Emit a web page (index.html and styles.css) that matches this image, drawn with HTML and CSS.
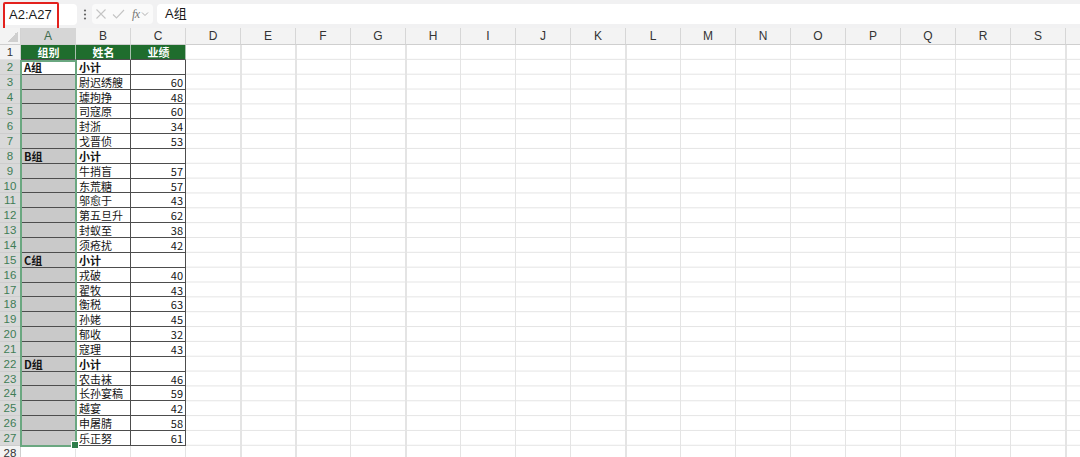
FILE: index.html
```html
<!DOCTYPE html>
<html lang="zh-CN">
<head>
<meta charset="utf-8">
<title>Sheet</title>
<link rel="stylesheet" href="styles.css">
</head>
<body>
<div class="toolbar">
  <div class="namebox">A2:A27</div>
  <div class="dots"><svg width="4" height="11" viewBox="0 0 4 11"><circle cx="2" cy="1.5" r="1.1" fill="#666"/><circle cx="2" cy="5.5" r="1.1" fill="#666"/><circle cx="2" cy="9.5" r="1.1" fill="#666"/></svg></div>
  <div class="fxbox">
    <svg class="ic" width="12" height="12" viewBox="0 0 12 12"><path d="M1.5 1.5 L10.5 10.5 M10.5 1.5 L1.5 10.5" stroke="#c4c4c4" stroke-width="1.1" fill="none"/></svg>
    <svg class="ic" width="13" height="12" viewBox="0 0 13 12"><path d="M1 6.5 L4.5 10 L12 2" stroke="#c4c4c4" stroke-width="1.1" fill="none"/></svg>
    <span class="fx">fx</span>
    <svg class="chev" width="8" height="6" viewBox="0 0 8 6"><path d="M1 1.5 L4 4.5 L7 1.5" stroke="#b0b0b0" stroke-width="1" fill="none"/></svg>
  </div>
  <div class="formula">A组</div>
</div>

<div class="sheet">
  <div class="corner"></div>
  <div class="ch sel">A</div>
  <div class="ch">B</div>
  <div class="ch">C</div>
  <div class="colrest">
    <div class="ch">D</div><div class="ch">E</div><div class="ch">F</div><div class="ch">G</div><div class="ch">H</div><div class="ch">I</div><div class="ch">J</div><div class="ch">K</div><div class="ch">L</div><div class="ch">M</div><div class="ch">N</div><div class="ch">O</div><div class="ch">P</div><div class="ch">Q</div><div class="ch">R</div><div class="ch">S</div><div class="ch"></div>
  </div>
  <div class="rest"></div>

  <div class="rh">1</div><div class="c hd">组别</div><div class="c hd">姓名</div><div class="c hd">业绩</div>
  <div class="rh sel">2</div><div class="c g">A组</div><div class="c g">小计</div><div class="c num"></div>
  <div class="rh sel">3</div><div class="c shade"></div><div class="c">尉迟绣艘</div><div class="c num">60</div>
  <div class="rh sel">4</div><div class="c shade"></div><div class="c">璩拘挣</div><div class="c num">48</div>
  <div class="rh sel">5</div><div class="c shade"></div><div class="c">司寇原</div><div class="c num">60</div>
  <div class="rh sel">6</div><div class="c shade"></div><div class="c">封浙</div><div class="c num">34</div>
  <div class="rh sel">7</div><div class="c shade"></div><div class="c">戈晋侦</div><div class="c num">53</div>
  <div class="rh sel">8</div><div class="c shade g">B组</div><div class="c g">小计</div><div class="c num"></div>
  <div class="rh sel">9</div><div class="c shade"></div><div class="c">牛捎盲</div><div class="c num">57</div>
  <div class="rh sel">10</div><div class="c shade"></div><div class="c">东荒糖</div><div class="c num">57</div>
  <div class="rh sel">11</div><div class="c shade"></div><div class="c">邬愈于</div><div class="c num">43</div>
  <div class="rh sel">12</div><div class="c shade"></div><div class="c">第五旦升</div><div class="c num">62</div>
  <div class="rh sel">13</div><div class="c shade"></div><div class="c">封蚁至</div><div class="c num">38</div>
  <div class="rh sel">14</div><div class="c shade"></div><div class="c">须疮扰</div><div class="c num">42</div>
  <div class="rh sel">15</div><div class="c shade g">C组</div><div class="c g">小计</div><div class="c num"></div>
  <div class="rh sel">16</div><div class="c shade"></div><div class="c">戎破</div><div class="c num">40</div>
  <div class="rh sel">17</div><div class="c shade"></div><div class="c">翟牧</div><div class="c num">43</div>
  <div class="rh sel">18</div><div class="c shade"></div><div class="c">衡税</div><div class="c num">63</div>
  <div class="rh sel">19</div><div class="c shade"></div><div class="c">孙姥</div><div class="c num">45</div>
  <div class="rh sel">20</div><div class="c shade"></div><div class="c">郁收</div><div class="c num">32</div>
  <div class="rh sel">21</div><div class="c shade"></div><div class="c">寇理</div><div class="c num">43</div>
  <div class="rh sel">22</div><div class="c shade g">D组</div><div class="c g">小计</div><div class="c num"></div>
  <div class="rh sel">23</div><div class="c shade"></div><div class="c">农击袜</div><div class="c num">46</div>
  <div class="rh sel">24</div><div class="c shade"></div><div class="c">长孙宴稿</div><div class="c num">59</div>
  <div class="rh sel">25</div><div class="c shade"></div><div class="c">越宴</div><div class="c num">42</div>
  <div class="rh sel">26</div><div class="c shade"></div><div class="c">申屠腈</div><div class="c num">58</div>
  <div class="rh sel">27</div><div class="c shade"></div><div class="c">乐正努</div><div class="c num">61</div>
  <div class="rh">28</div><div class="blank"></div><div class="blank"></div><div class="blank"></div>

  <div class="selbox"></div>
</div>
</body>
</html>
```
FILE: styles.css
```css
* { box-sizing: border-box; }
html, body { margin: 0; padding: 0; }
body {
  width: 1080px;
  height: 457px;
  overflow: hidden;
  background: #fff;
  color: #111;
  font-family: "Noto Sans CJK SC", "Noto Sans", sans-serif;
}

/* ---------- formula bar ---------- */
.toolbar {
  height: 28px;
  background: #f1f1f2;
  display: flex;
  align-items: center;
  padding-left: 4px;
}
.namebox {
  position: relative;
  width: 73px;
  height: 21px;
  background: #fff;
  border-radius: 4px;
  padding-left: 5px;
  font-family: "Liberation Sans", sans-serif;
  font-size: 13px;
  line-height: 21px;
  color: #1a1a1a;
}
.namebox::after {
  content: "";
  position: absolute;
  left: -1px;
  top: -2px;
  width: 52px;
  height: 25px;
  border: 2px solid #e3211d;
  border-radius: 2px;
}
.dots {
  width: 15px;
  display: flex;
  justify-content: center;
  align-items: center;
}
.fxbox {
  width: 61px;
  height: 20px;
  background: #fafafa;
  border-radius: 4px;
  display: flex;
  align-items: center;
  padding-left: 3px;
  gap: 5px;
}
.fx {
  font-family: "Liberation Serif", serif;
  font-style: italic;
  font-size: 12px;
  color: #777;
  margin-left: 2px;
  letter-spacing: -0.5px;
}
.chev { margin-left: -4px; }
.formula {
  flex: 1;
  height: 20px;
  margin-left: 4px;
  background: #fff;
  border-radius: 4px 0 0 4px;
  padding-left: 8px;
  font-family: "Liberation Sans", "Noto Sans CJK SC", sans-serif;
  font-size: 13px;
  line-height: 20px;
  color: #1a1a1a;
}

/* ---------- sheet grid ---------- */
.sheet {
  position: relative;
  display: grid;
  grid-template-columns: 21px 55px 55px 55px 1fr;
  grid-template-rows: 17px repeat(28, 14.85px);
}
.corner {
  background: #f3f3f3 linear-gradient(to top left, #cfcfcf 50%, transparent 50%) no-repeat right 2px bottom 2px / 11px 11px;
  border-right: 1px solid #d3d3d3;
  border-bottom: 1px solid #cfcfcf;
}
.ch {
  background: #f3f3f3;
  border-right: 1px solid #d6d6d6;
  border-bottom: 1px solid #cfcfcf;
  font-family: "Liberation Sans", sans-serif;
  font-size: 12px;
  line-height: 16px;
  text-align: center;
  color: #333;
}
.ch.sel { background: #d6d6d6; color: #3d6b4e; }
.colrest { display: flex; background: #f3f3f3; overflow: hidden; }
.colrest .ch { flex: 0 0 55px; }
.rest {
  grid-column: 5;
  grid-row: 2 / 30;
  background-image:
    linear-gradient(to right, transparent 54px, #e4e4e4 54px),
    linear-gradient(to bottom, transparent 13.85px, #e4e4e4 13.85px);
  background-size: 55px 14.85px;
}
.rh {
  background: #f3f3f3;
  border-right: 1px solid #cfcfcf;
  border-bottom: 1px solid #e2e2e2;
  font-family: "Liberation Sans", sans-serif;
  font-size: 11.5px;
  line-height: 14px;
  text-align: center;
  color: #333;
}
.rh.sel { background: #d9d9d9; color: #3f7d56; border-bottom-color: #cdcdcd; }

.c {
  border-right: 1px solid #4d4d4d;
  border-bottom: 1px solid #4d4d4d;
  padding: 1px 2px 0 3px;
  font-size: 11px;
  line-height: 13px;
  white-space: nowrap;
  overflow: hidden;
  color: #151515;
}
.hd {
  background: #1f6d2d;
  color: #fff;
  font-weight: bold;
  text-align: center;
  border-right-color: #a8c0ae;
}
.g { font-weight: bold; }
.num { text-align: right; }
.shade { background: #c9c9c9; }
.blank {
  border-right: 1px solid #e4e4e4;
  border-bottom: 1px solid #e4e4e4;
}

/* selection outline over A2:A27 */
.selbox {
  position: absolute;
  grid-column: 2 / 3;
  grid-row: 3 / 29;
  top: 0;
  bottom: -1px;
  left: -1px;
  right: -1px;
  border: 2px solid #6aa780;
  pointer-events: none;
}
.selbox::after {
  content: "";
  position: absolute;
  right: -4px;
  bottom: -4px;
  width: 6px;
  height: 6px;
  background: #2f7d4a;
  border: 1px solid #fff;
}
```
